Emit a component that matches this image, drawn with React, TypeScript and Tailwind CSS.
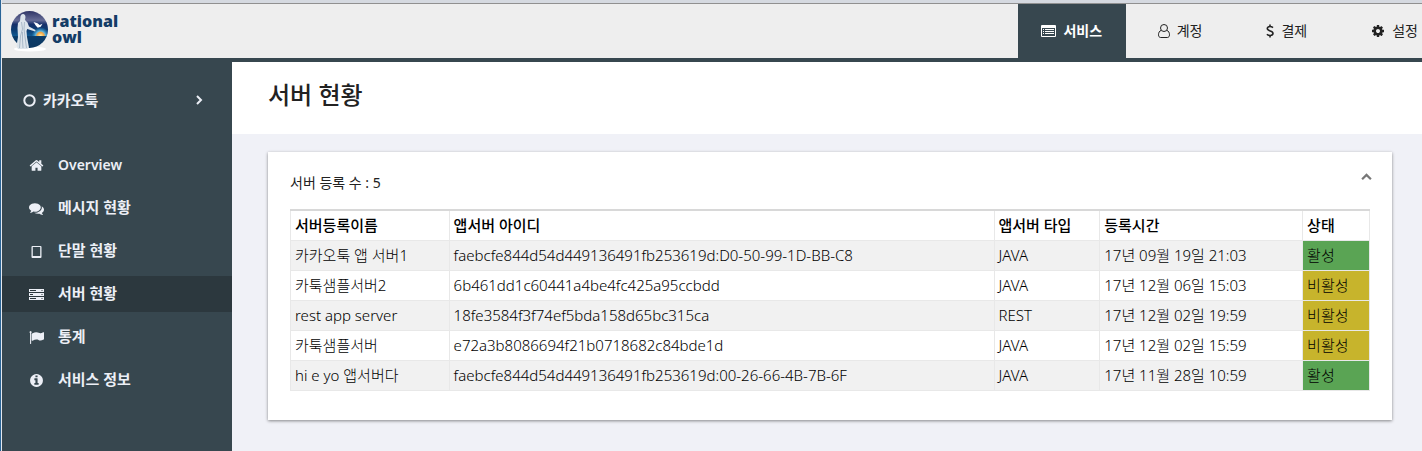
import React from "react";

const FONT = "font-['Noto_Sans','Noto_Sans_CJK_KR',sans-serif]";

type IconProps = { className?: string };

function Glyph({ d, className = "size-[15px]" }: { d: string; className?: string }) {
  return (
    <svg viewBox="0 0 1792 1792" className={className} fill="currentColor" aria-hidden="true">
      <path d={d} />
    </svg>
  );
}

const HOME =
  "M1472 992v480q0 26-19 45t-45 19h-384v-384h-256v384h-384q-26 0-45-19t-19-45v-480q0-1 .5-3t.5-3l575-474 575 474q1 2 1 6zm223-69l-62 74q-8 9-21 11h-3q-13 0-21-7l-692-577-692 577q-12 8-24 7-13-2-21-11l-62-74q-8-10-7-23.5t11-21.5l719-599q32-26 76-26t76 26l244 204v-195q0-14 9-23t23-9h192q14 0 23 9t9 23v408l219 182q10 8 11 21.5t-7 23.5z";
const COMMENTS =
  "M1408 768q0 139-94 257t-256.5 186.5-353.5 68.5q-86 0-176-16-124 88-278 128-36 9-86 16h-3q-11 0-20.5-8t-11.5-21q-1-3-1-6.5t.5-6.5 2-6l2.5-5 3.5-5.5 4-5 4.5-5 4-4.5q5-6 23-25t26-29.5 22.5-29 25-38.5 20.5-44q-124-72-195-177t-71-224q0-139 94-257t256.5-186.5 353.5-68.5 353.5 68.5 256.5 186.5 94 257zm384 256q0 120-71 224.5t-195 176.5q10 24 20.5 44t25 38.5 22.5 29 26 29.5 23 25q1 1 4 4.5t4.5 5 4 5 3.5 5.5l2.5 5 2 6 .5 6.5-1 6.5q-3 14-13 22t-22 7q-50-7-86-16-154-40-278-128-90 16-176 16-271 0-472-132 58 4 88 4 161 0 309-45t264-129q125-92 192-212t67-254q0-77-23-152 129 71 204 178t75 230z";
const FLAG =
  "M320 256q0 72-64 110v1266q0 13-9.5 22.5t-22.5 9.5h-64q-13 0-22.5-9.5t-9.5-22.5v-1266q-64-38-64-110 0-53 37.5-90.5t90.5-37.5 90.5 37.5 37.5 90.5zm1472 64v763q0 25-12.5 38.5t-39.5 27.5q-215 116-369 116-61 0-123.5-22t-108.5-48-115.5-48-142.5-22q-192 0-464 146-17 9-33 9-26 0-45-19t-19-45v-742q0-32 31-55 21-14 79-43 236-120 421-120 107 0 200 29t219 88q38 19 88 19 54 0 117.5-21t110-47 88-47 54.5-21q26 0 45 19t19 45z";
const INFO =
  "M1152 1376v-160q0-14-9-23t-23-9h-96v-512q0-14-9-23t-23-9h-320q-14 0-23 9t-9 23v160q0 14 9 23t23 9h96v320h-96q-14 0-23 9t-9 23v160q0 14 9 23t23 9h448q14 0 23-9t9-23zm-128-896v-160q0-14-9-23t-23-9h-192q-14 0-23 9t-9 23v160q0 14 9 23t23 9h192q14 0 23-9t9-23zm640 416q0 209-103 385.5t-279.5 279.5-385.5 103-385.5-103-279.5-279.5-103-385.5 103-385.5 279.5-279.5 385.5-103 385.5 103 279.5 279.5 103 385.5z";
const COG =
  "M1152 896q0-106-75-181t-181-75-181 75-75 181 75 181 181 75 181-75 75-181zm512-109v222q0 12-8 23t-20 13l-185 28q-19 54-39 91 35 50 107 138 10 12 10 25t-9 23q-27 37-99 108t-94 71q-12 0-26-9l-138-108q-44 23-91 38-16 136-29 186-7 28-36 28h-222q-14 0-24.5-8.5t-11.5-21.5l-28-184q-49-16-90-37l-141 107q-10 9-25 9-14 0-25-11-126-114-165-168-7-10-7-23 0-12 8-23 15-21 51-66.5t54-70.5q-27-50-41-99l-183-27q-13-2-21-12.5t-8-23.5v-222q0-12 8-23t19-13l186-28q14-46 39-92-40-57-107-138-10-12-10-24 0-10 9-23 26-36 98.5-107.5t94.5-71.5q13 0 26 10l138 107q44-23 91-38 16-136 29-186 7-28 36-28h222q14 0 24.5 8.5t11.5 21.5l28 184q49 16 90 37l142-107q9-9 24-9 13 0 25 10 129 119 165 170 7 8 7 22 0 12-8 23-15 21-51 66.5t-54 70.5q26 50 41 98l183 28q13 2 21 12.5t8 23.5z";

function TabletIcon() {
  return (
    <svg viewBox="0 0 15 15" className="size-[15px]" aria-hidden="true">
      <path
        fill="currentColor"
        fillRule="evenodd"
        d="M3.500 2h8a1 1 0 0 1 1 1v10a1 1 0 0 1-1 1h-8a1 1 0 0 1-1-1V3a1 1 0 0 1 1-1zm.3 1v9h7.400V3z"
      />
    </svg>
  );
}

function ServerIcon() {
  return (
    <svg viewBox="0 0 15 15" className="size-[15px]" aria-hidden="true">
      <path
        fill="currentColor"
        fillRule="evenodd"
        d="M0 2h15v3H0zM0 6h15v3H0zM0 10h15v3H0zM1 3v1h6V3zM1 7v1h3V7zM1 11v1h6v-1zM12.500 3v1h1V3zM12.500 7v1h1V7zM12.500 11v1h1v-1z"
      />
    </svg>
  );
}

function ListIcon() {
  return (
    <svg viewBox="0 0 15 12" className="h-3 w-[15px]" aria-hidden="true">
      <path
        fill="currentColor"
        fillRule="evenodd"
        d="M1 0h13a1 1 0 0 1 1 1v10a1 1 0 0 1-1 1H1a1 1 0 0 1-1-1V1a1 1 0 0 1 1-1zM1 3v8h13V3zM2 4h1v1H2zM4 4h9v1H4zM2 6h1v1H2zM4 6h9v1H4zM2 8h1v1H2zM4 8h9v1H4z"
      />
      <path fill="currentColor" d="M1 2h13v1H1z" />
    </svg>
  );
}

function UserIcon() {
  return (
    <svg viewBox="0 0 12 14" className="h-[14px] w-3" fill="none" stroke="currentColor" aria-hidden="true">
      <circle cx="6" cy="4" r="3.500" />
      <path d="M3.200 6.300C1.400 7 .5 8.700.5 10.800c0 1.600.8 2.700 2.200 2.700h6.600c1.400 0 2.200-1.100 2.200-2.700 0-2.100-.9-3.800-2.700-4.500" />
    </svg>
  );
}

function DollarIcon() {
  return (
    <svg viewBox="0 0 8 14" className="h-[14px] w-2" fill="none" stroke="currentColor" strokeWidth="1.600" aria-hidden="true">
      <path d="M4 .5v2M4 11.500v2M7 3.600C6.200 2.900 5.200 2.500 4 2.500c-1.700 0-2.700.8-2.700 2C1.300 7.500 7 6.300 7 9.300c0 1.300-1.100 2.200-2.900 2.200C2.800 11.500 1.700 11 .9 10.200" />
    </svg>
  );
}

function Chevron({ className, d }: IconProps & { d: string }) {
  return (
    <svg viewBox="0 0 10 10" className={className} fill="none" stroke="currentColor" strokeWidth="2" aria-hidden="true">
      <path d={d} />
    </svg>
  );
}

function LogoMark() {
  return (
    <svg viewBox="0 0 40 42" className="h-[42px] w-10" aria-hidden="true">
      <defs>
        <linearGradient id="sky" x1="0" y1="0" x2="0" y2="1">
          <stop offset="0" stopColor="#2f3566" />
          <stop offset="0.25" stopColor="#666c96" />
          <stop offset="0.36" stopColor="#16306a" />
          <stop offset="0.5" stopColor="#0d3b70" />
          <stop offset="0.68" stopColor="#125a92" />
          <stop offset="0.69" stopColor="#0c3c69" />
          <stop offset="1" stopColor="#0c3760" />
        </linearGradient>
        <radialGradient id="sun">
          <stop offset="0" stopColor="#fff3b0" />
          <stop offset="0.4" stopColor="#f2a444" />
          <stop offset="0.55" stopColor="#5fb4dc" />
          <stop offset="1" stopColor="#1f86c4" stopOpacity="0" />
        </radialGradient>
        <clipPath id="horizon">
          <path d="M0 0h37v26H0z" />
        </clipPath>
      </defs>
      <ellipse cx="20" cy="39" rx="16" ry="2.500" fill="#fff" />
      <circle cx="19.500" cy="19.500" r="18.500" fill="url(#sky)" />
      <circle cx="30.500" cy="26" r="9" fill="url(#sun)" clipPath="url(#horizon)" />
      <path d="M23.500 12l4 1.200 2.200 1.800 2.800-1.200-1.800 3-3 1-2-2.200z" fill="#fff" />
      <path
        d="M10.500 6q1-2.500 3-2t2 3l-.5 3 2.500 2.500 1.500 4 6.500 3.500-.3 1.500-8-2.500-.7 2 .5 6 2 10.500-1.500 1.500H8L6.500 36 8 27l-.5-9 .5-5 2-2z"
        fill="#dce4eb"
      />
      <path
        d="M11.500 12l1 7-2 7-1 12M14.500 12l-.5 7 1 8 1.500 11M12.500 22v8l.5 8"
        fill="none"
        stroke="#93a7ba"
        strokeWidth=".7"
      />
    </svg>
  );
}

const menu = [
  { label: "Overview", icon: <Glyph d={HOME} />, text: "text-sm font-semibold" },
  { label: "메시지 현황", icon: <Glyph d={COMMENTS} /> },
  { label: "단말 현황", icon: <TabletIcon /> },
  { label: "서버 현황", icon: <ServerIcon />, active: true },
  { label: "통계", icon: <Glyph d={FLAG} /> },
  { label: "서비스 정보", icon: <Glyph d={INFO} /> },
];

const tabs = [
  { label: "계정", icon: <UserIcon /> },
  { label: "결제", icon: <DollarIcon /> },
  { label: "설정", icon: <Glyph d={COG} className="size-[14px]" /> },
];

const servers = [
  ["카카오툭 앱 서버1", "faebcfe844d54d449136491fb253619d:D0-50-99-1D-BB-C8", "JAVA", "17년 09월 19일 21:03", "활성"],
  ["카툭샘플서버2", "6b461dd1c60441a4be4fc425a95ccbdd", "JAVA", "17년 12월 06일 15:03", "비활성"],
  ["rest app server", "18fe3584f3f74ef5bda158d65bc315ca", "REST", "17년 12월 02일 19:59", "비활성"],
  ["카툭샘플서버", "e72a3b8086694f21b0718682c84bde1d", "JAVA", "17년 12월 02일 15:59", "비활성"],
  ["hi e yo 앱서버다", "faebcfe844d54d449136491fb253619d:00-26-66-4B-7B-6F", "JAVA", "17년 11월 28일 10:59", "활성"],
];

const columns = [
  { label: "서버등록이름", width: "w-[14.7%]" },
  { label: "앱서버 아이디", width: "w-[50.5%]" },
  { label: "앱서버 타입", width: "w-[9.8%]" },
  { label: "등록시간", width: "w-[18.8%]" },
  { label: "상태", width: "w-[6.2%]" },
];

export default function App() {
  return (
    <div className="border-l border-[#2a6496]">
      <div className={`flex min-h-screen flex-col border-l border-[#e4e8ee] bg-[#f0f1f7] text-sm text-[#222] ${FONT}`}>
        <div className="h-1 border-b border-[#909090] bg-[#d5d9e0]" />
        <header className="flex h-[58px] justify-between overflow-hidden border-b-4 border-[#37474f] bg-[#eeeeee]">
          <a href="#" className="flex items-center gap-[2px] pl-2">
            <LogoMark />
            <span className="flex flex-col pb-1 font-['Open_Sans',sans-serif] text-base leading-4 font-extrabold text-[#143c66]">
              <span>rational</span>
              <span>owl</span>
            </span>
          </a>
          <nav className="flex">
            <a href="#" className="flex w-[108px] items-center justify-center gap-[7px] bg-[#37474f] font-bold text-white">
              <ListIcon />
              서비스
            </a>
            {tabs.map((t) => (
              <a key={t.label} href="#" className="flex items-center gap-[7px] px-8 last:pr-1">
                {t.icon}
                {t.label}
              </a>
            ))}
          </nav>
        </header>

        <div className="flex flex-1">
          <aside className="w-[230px] shrink-0 bg-[#37474f] text-[15px] font-bold text-[#eceff6]">
            <button type="button" className="flex w-full items-center gap-[7px] pt-7 pr-7 pl-[21px] text-left leading-5">
              <svg viewBox="0 0 13 13" className="size-[13px]" fill="none" stroke="currentColor" strokeWidth="2" aria-hidden="true">
                <circle cx="6.500" cy="6.500" r="5.200" />
              </svg>
              <span className="flex-1">카카오툭</span>
              <Chevron className="size-[10px]" d="M3 1l4 4-4 4" />
            </button>
            <nav className="mt-[37px] flex flex-col gap-[7px]">
              {menu.map((m) => (
                <a
                  key={m.label}
                  href="#"
                  className={`flex h-9 items-center gap-[14px] pl-[27px] ${m.active ? "bg-[#2c383e]" : ""}`}
                >
                  {m.icon}
                  <span className={m.text}>{m.label}</span>
                </a>
              ))}
            </nav>
          </aside>

          <main className="min-w-0 flex-1">
            <div className="flex h-[72px] items-center bg-white px-9 pb-[6px]">
              <h1 className="text-2xl leading-8 font-medium">서버 현황</h1>
            </div>
            <section className="mt-[18px] mr-[30px] ml-9 bg-white px-[22px] pb-[29px] shadow-[0_1px_3px_rgba(0,0,0,0.45)]">
              <div className="flex h-[57px] items-center justify-between">
                <p className="pt-1">서버 등록 수 : 5</p>
                <button type="button" aria-label="접기" className="-mr-[2px] pb-2 text-[#777]">
                  <Chevron className="size-[11px]" d="M1 7.500l4-4 4 4" />
                </button>
              </div>
              <table className="w-full table-fixed border-collapse border border-[#e8e8e8] border-t-2 border-t-[#d8d8d8] text-left text-[15px] leading-5 text-black">
                <thead>
                  <tr className="h-[30px]">
                    {columns.map((c) => (
                      <th key={c.label} className={`border-x border-[#e8e8e8] px-1 font-medium ${c.width}`}>
                        {c.label}
                      </th>
                    ))}
                  </tr>
                </thead>
                <tbody>
                  {servers.map((row) => (
                    <tr key={row[1]} className="h-[30px] odd:bg-[#f1f1f1]">
                      {row.map((cell, i) => (
                        <td
                          key={i}
                          className={`truncate border border-[#e8e8e8] px-1 font-light ${
                            i < 4 ? "" : cell === "활성" ? "bg-[#5aa454]" : "bg-[#c7b42c]"
                          }`}
                        >
                          {cell}
                        </td>
                      ))}
                    </tr>
                  ))}
                </tbody>
              </table>
            </section>
          </main>
        </div>
      </div>
    </div>
  );
}
